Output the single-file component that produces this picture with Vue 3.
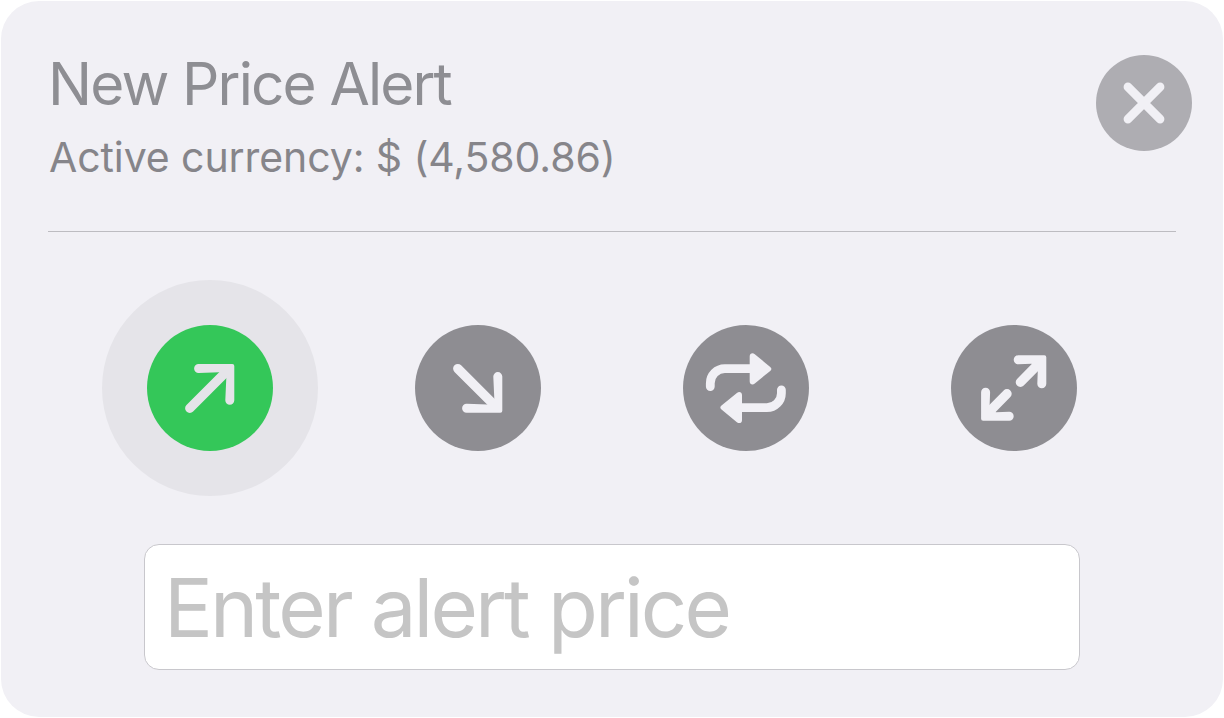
<script setup>
import { ref } from 'vue'

const modes = ['above', 'below', 'cross', 'range']
const active = ref('above')
const price = ref('')
</script>

<template>
  <main class="card">
    <header class="header">
      <div class="titles">
        <h1 class="title">New Price Alert</h1>
        <p class="subtitle">Active currency: $ (4,580.86)</p>
      </div>
      <button class="close" aria-label="Close">
        <svg viewBox="0 0 96 96" width="96" height="96">
          <path d="M31.9 31.9 64.1 64.1M64.1 31.9 31.9 64.1" stroke="currentColor" stroke-width="8.6" stroke-linecap="round" />
        </svg>
      </button>
    </header>

    <section class="modes">
      <button
        v-for="mode in modes"
        :key="mode"
        class="mode"
        :class="{ active: mode === active }"
        :aria-label="mode"
        @click="active = mode"
      >
        <span class="disc">
          <svg viewBox="0 0 126 126" width="126" height="126">
            <g v-if="mode === 'above' || mode === 'below'" :transform="mode === 'below' ? 'matrix(1 0 0 -1 0 126.8)' : undefined">
              <path class="fill" d="M51.6 39H85.3a2 2 0 0 1 2 2V75.2a4.5 4.5 0 0 1-9 0L79.3 53 72.5 47.3 51.6 48a4.5 4.5 0 0 1 0-9z" />
              <path class="line" d="M42.8 83.2 81 45" />
            </g>
            <g v-else-if="mode === 'cross'">
              <g v-for="turn in [0, 180]" :key="turn" :transform="`rotate(${turn} 62.85 63.2)`">
                <path class="line stem" d="M27.3 61.6V58.2A14.5 14.5 0 0 1 41.8 43.7H68" />
                <path class="fill" d="M66.7 31.2C66.7 28.4 69.6 27.4 71.8 29.2L87.2 41.9Q89.6 43.9 87.2 45.9L71.8 58.5C69.6 60.3 66.7 59.3 66.7 56.5Z" />
              </g>
            </g>
            <g v-else>
              <g v-for="turn in [0, 180]" :key="turn" :transform="`rotate(${turn} 62.7 63)`">
                <path class="fill" d="M67.2 30.2H93.3a2 2 0 0 1 2 2V58.8a4.5 4.5 0 0 1-9 0L86.8 45.5 80.5 38.7 67.2 39.2a4.5 4.5 0 0 1 0-9z" />
                <path class="line" d="M69.4 57.2 89 37.4" />
              </g>
            </g>
          </svg>
        </span>
      </button>
    </section>

    <input v-model="price" class="price" type="text" placeholder="Enter alert price" />
  </main>
</template>

<style>
body {
  background: #fff;
}
</style>

<style scoped>
.card {
  box-sizing: border-box;
  width: 1222px;
  height: 716px;
  margin: 1px;
  padding: 0 47px;
  border-radius: 38px;
  background: #f1f0f5;
  font-family: Inter, "Liberation Sans", sans-serif;
  display: flex;
  flex-direction: column;
  overflow: hidden;
}
.header {
  box-sizing: border-box;
  height: 231px;
  flex: none;
  border-bottom: 1px solid #bdbcc1;
  display: flex;
  justify-content: space-between;
  padding-top: 54px;
}
.titles {
  white-space: nowrap;
}
.title {
  margin: -6px 0 0;
  font-size: 58.5px;
  line-height: 70px;
  font-weight: 400;
  letter-spacing: -1.85px;
  color: #8e8e93;
}
.subtitle {
  margin: 13px 0 0 1px;
  font-size: 41px;
  line-height: 50px;
  letter-spacing: -0.09px;
  color: #86858a;
}
button {
  border: 0;
  padding: 0;
  background: none;
}
svg {
  display: block;
  fill: none;
}
.close {
  width: 96px;
  height: 96px;
  margin-right: -16px;
  border-radius: 50%;
  background: #aeadb2;
  color: #f1f0f5;
}
.modes {
  display: flex;
  gap: 52px;
  margin: 48px 0 0 54px;
}
.mode {
  width: 216px;
  height: 216px;
  border-radius: 50%;
  color: #f1f0f5;
  display: grid;
  place-items: center;
}
.mode.active {
  background: #e5e4e9;
  color: #e5e4e9;
}
.disc {
  width: 126px;
  height: 126px;
  border-radius: 50%;
  background: #8e8d92;
}
.active .disc {
  background: #34c759;
}
.fill {
  fill: currentColor;
}
.line {
  stroke: currentColor;
  stroke-width: 9.4;
  stroke-linecap: round;
}
.stem {
  stroke-width: 8.8;
}
.price {
  box-sizing: border-box;
  width: 936px;
  height: 126px;
  flex: none;
  margin: 48px 0 0 96px;
  padding: 0 18px 0 19px;
  border: 1px solid #c8c7cc;
  border-radius: 15px;
  background: #fff;
  outline: none;
  font-family: inherit;
  font-size: 81.5px;
  letter-spacing: -2.9px;
  color: #111;
}
.price::placeholder {
  color: #c5c5c5;
  opacity: 1;
}
</style>
